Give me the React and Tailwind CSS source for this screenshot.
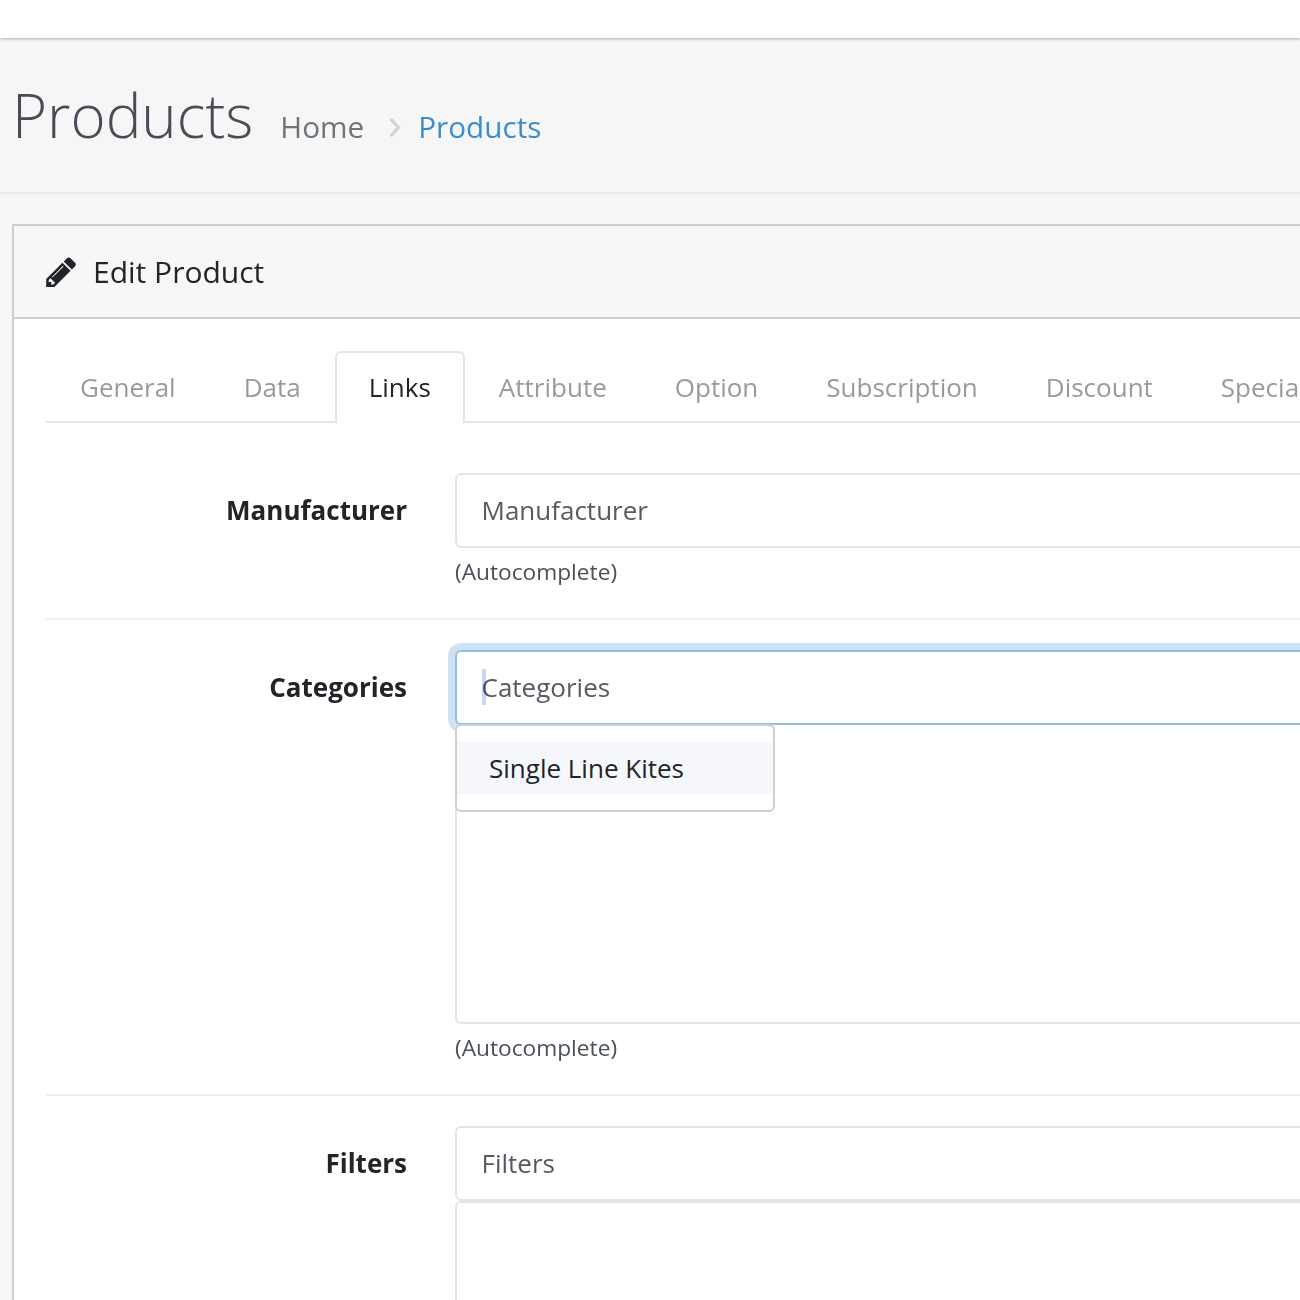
const font = { fontFamily: '"Open Sans", sans-serif' };

const tabs = ['General', 'Data', 'Links', 'Attribute', 'Option', 'Subscription', 'Discount', 'Special'];

const PencilIcon = () => (
    <svg viewBox="128 128 1515 1536" className="h-[30px] w-[30px] shrink-0" fill="#212529">
        <path d="M491 1536l91-91-235-235-91 91v107h128v128h107zm523-928q0-22-22-22-10 0-17 7l-542 542q-7 7-7 17 0 22 22 22 10 0 17-7l542-542q7-7 7-17zm-54-192l416 416-832 832h-416v-416zm683 96q0 53-37 90l-166 166-416-416 166-165q36-38 90-38 53 0 91 38l235 234q37 39 37 91z" />
    </svg>
);

const Field = ({ label, help, children, className = '' }) => (
    <div className={`flex gap-[48px] ${className}`}>
        <label className="mt-[19px] w-[361px] shrink-0 text-right text-[26px] leading-[37px] font-bold text-[#212529]">
            {label}
        </label>
        <div className="relative flex-1">
            {children}
            {help && <div className="mt-[7px] text-[22.700px] leading-[34px] text-[#495057]">{help}</div>}
        </div>
    </div>
);

const TextInput = ({ placeholder, focused }) => (
    <input
        readOnly
        placeholder={placeholder}
        className={`block h-[75px] w-full rounded-[6px] border-2 bg-white pr-[24px] pb-[2px] pl-[24.500px] text-[26px] outline-none placeholder:text-[#555b61] ${
            focused ? 'border-[#8fc1e6] shadow-[0_0_0_7px_#d0e2f2]' : 'border-[#e1e5ea]'
        }`}
    />
);

const App = () => {
    return (
        <div className="h-[1300px] w-[1300px] overflow-hidden bg-[#f6f6f6]" style={font}>
            <div className="h-[38px] bg-white shadow-[0_1px_3px_rgba(0,0,0,0.3)]" />

            {/* Page header */}
            <div className="flex h-[156px] items-center gap-[27px] border-b-2 border-[#eaeaea] pl-[12px]">
                <h1 className="text-[60px] leading-none font-light text-[#4b4b58]">Products</h1>
                <div className="mt-[23px] flex items-center text-[29.700px] leading-none">
                    <span className="text-[#6c757d]">Home</span>
                    <svg viewBox="0 0 14 24" className="mt-[3px] mr-[17px] ml-[25px] h-[23px] w-[12px]" fill="none" stroke="#ced4da" strokeWidth="3.800">
                        <path d="M2 2l9 10-9 10" />
                    </svg>
                    <span className="text-[#3c8dcc]">Products</span>
                </div>
            </div>

            {/* Panel */}
            <div className="mt-[30px] ml-[12px] w-[1500px] border-2 border-r-0 border-b-0 border-[#cfcfcf] bg-white">
                <div className="flex h-[93px] items-center gap-[18px] border-b-2 border-[#cfcfcf] bg-[#f7f7f7] pl-[32px]">
                    <PencilIcon />
                    <span className="-ml-[1px] text-[30px] leading-none text-[#212529]">Edit Product</span>
                </div>

                <div className="pt-[32px] pl-[32px]">
                    {/* Tabs */}
                    <div className="flex h-[72px] border-b-2 border-[#e1e5ea]">
                        {tabs.map((tab) =>
                            tab === 'Links' ? (
                                <div
                                    key={tab}
                                    className="-mb-[2px] flex h-[72px] items-center rounded-t-[6px] border-2 border-b-0 border-[#e1e5ea] bg-white px-[32px] pb-[2px] text-[26px] text-[#212529]"
                                >
                                    {tab}
                                </div>
                            ) : (
                                <div key={tab} className="flex h-[72px] items-center border-2 border-b-0 border-transparent px-[32px] pb-[2px] text-[26px] text-[#9a9a9a]">
                                    {tab}
                                </div>
                            ),
                        )}
                    </div>

                    <Field label="Manufacturer" help="(Autocomplete)" className="border-b-2 border-[#eeeeee] pt-[50px] pb-[29px]">
                        <TextInput placeholder="Manufacturer" />
                    </Field>

                    <Field label="Categories" help="(Autocomplete)" className="border-b-2 border-[#eeeeee] pt-[30px] pb-[29px]">
                        <TextInput placeholder="Categories" focused />
                        {/* text cursor */}
                        <span className="absolute top-[19px] left-[27px] h-[36px] w-[4px] bg-[#c5d9f7] mix-blend-multiply" />
                        <div className="h-[299px] rounded-b-[6px] border-2 border-t-0 border-[#e1e5ea] bg-white" />
                        {/* autocomplete menu */}
                        <div className="absolute top-[74px] left-0 w-[320px] rounded-[6px] border-2 border-[#cfcfcf] bg-white py-[16px]">
                            <div className="bg-[#f5f7fa] px-[32px] py-[7px] text-[26px] leading-[38px] text-[#212529]">Single Line Kites</div>
                        </div>
                    </Field>

                    <Field label="Filters" className="pt-[30px]">
                        <TextInput placeholder="Filters" />
                        <div className="h-[300px] rounded-t-[6px] border-2 border-[#e1e5ea] bg-white" />
                    </Field>
                </div>
            </div>
        </div>
    );
};

export default App;
